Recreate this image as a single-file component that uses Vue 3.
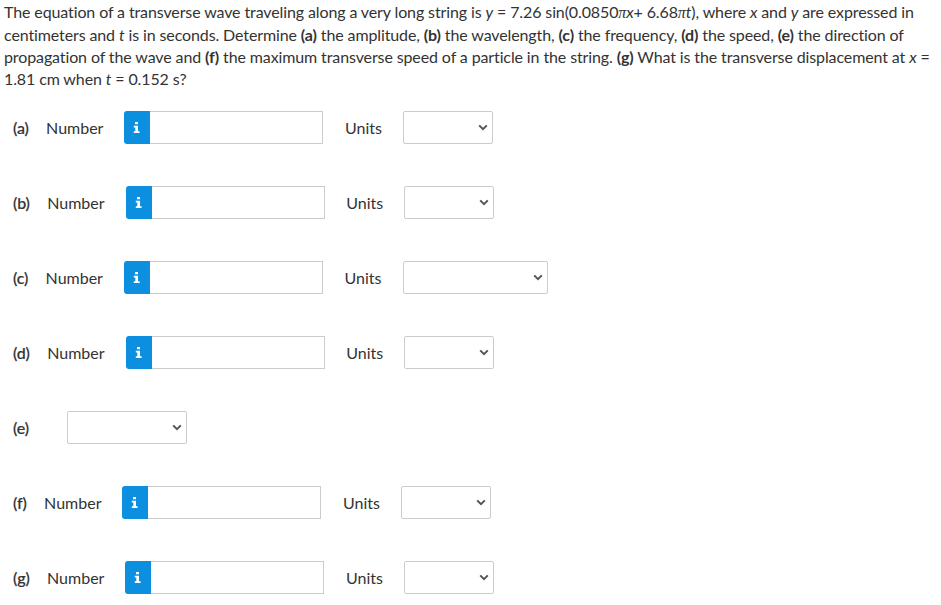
<script setup>
const parts = [
  { id: 'a', kind: 'number', selectWidth: 90 },
  { id: 'b', kind: 'number', selectWidth: 90 },
  { id: 'c', kind: 'number', selectWidth: 145 },
  { id: 'd', kind: 'number', selectWidth: 90 },
  { id: 'e', kind: 'select', selectWidth: 120 },
  { id: 'f', kind: 'number', selectWidth: 90 },
  { id: 'g', kind: 'number', selectWidth: 90 }
]
</script>

<template>
  <div class="question">
    <p class="prompt">
      The equation of a transverse wave traveling along a very long string is <i>y</i> = 7.26 sin(0.0850<i class="pi">π</i><i>x</i>+ 6.68<i class="pi">π</i><i>t</i>), where <i>x</i> and <i>y</i> are expressed in centimeters and <i>t</i> is in seconds. Determine <b>(a)</b> the amplitude, <b>(b)</b> the wavelength, <b>(c)</b> the frequency, <b>(d)</b> the speed, <b>(e)</b> the direction of propagation of the wave and <b>(f)</b> the maximum transverse speed of a particle in the string. <b>(g)</b> What is the transverse displacement at <i>x</i> = 1.81 cm when <i>t</i> = 0.152 s?
    </p>

    <div v-for="part in parts" :key="part.id" class="row">
      <span class="part">({{ part.id }})</span>
      <template v-if="part.kind === 'number'">
        <span class="label">Number</span>
        <span class="info">
          <svg width="8" height="11" viewBox="0 0 8 11">
            <path d="M2 0h3v2.2H2zM.8 3.8H5v5.4h1.6V11H.8V9.2h1.5V5.6H.8z" fill="#fff" />
          </svg>
        </span>
        <input class="answer" type="text" />
        <span class="units">Units</span>
      </template>
      <span class="picker" :class="{ solo: part.kind === 'select' }" :style="{ width: part.selectWidth + 'px' }">
        <select><option></option></select>
        <svg class="chevron" width="10" height="7" viewBox="0 0 10 7">
          <path d="M1.2 1.4 5 5.2l3.8-3.8" fill="none" stroke="#555" stroke-width="2" />
        </svg>
      </span>
    </div>
  </div>
</template>

<style scoped>
.question {
  padding: 1px 5px 0 4px;
  font-family: Lato, "Open Sans", sans-serif;
  font-size: 16px;
  letter-spacing: -0.115px;
  color: #333;
}
.prompt {
  margin: 0 0 22px;
  height: 88px;
  line-height: 22px;
}
.pi {
  font-family: "Liberation Serif", serif;
}
.row {
  display: flex;
  align-items: center;
  height: 33px;
  margin-bottom: 42px;
  padding-left: 9px;
}
.row:last-child {
  margin-bottom: 0;
}
.part {
  margin-right: 17.4px;
  font-weight: 500;
  -webkit-text-stroke: 0.2px #333;
}
.label {
  margin-right: 21px;
  letter-spacing: 0;
}
.info {
  display: flex;
  align-items: center;
  justify-content: center;
  width: 26px;
  height: 33px;
  background: #0d8fe0;
  border-radius: 3px 0 0 3px;
}
.answer {
  box-sizing: border-box;
  width: 173px;
  height: 33px;
  margin: 0;
  padding: 0 6px;
  border: 1px solid #ccc;
  border-left: 0;
  background: #fff;
  outline: 0;
}
.units {
  width: 58px;
  margin-left: 21.6px;
  letter-spacing: 0;
}
.picker {
  position: relative;
  display: block;
  height: 33px;
}
.picker.solo {
  margin-left: 21px;
}
.picker select {
  box-sizing: border-box;
  display: block;
  width: 100%;
  height: 100%;
  border: 1px solid #ccc;
  border-radius: 2px;
  background: #fff;
  appearance: none;
  font-family: inherit;
  font-size: 14px;
}
.chevron {
  position: absolute;
  top: 13px;
  right: 5px;
  pointer-events: none;
}
</style>
